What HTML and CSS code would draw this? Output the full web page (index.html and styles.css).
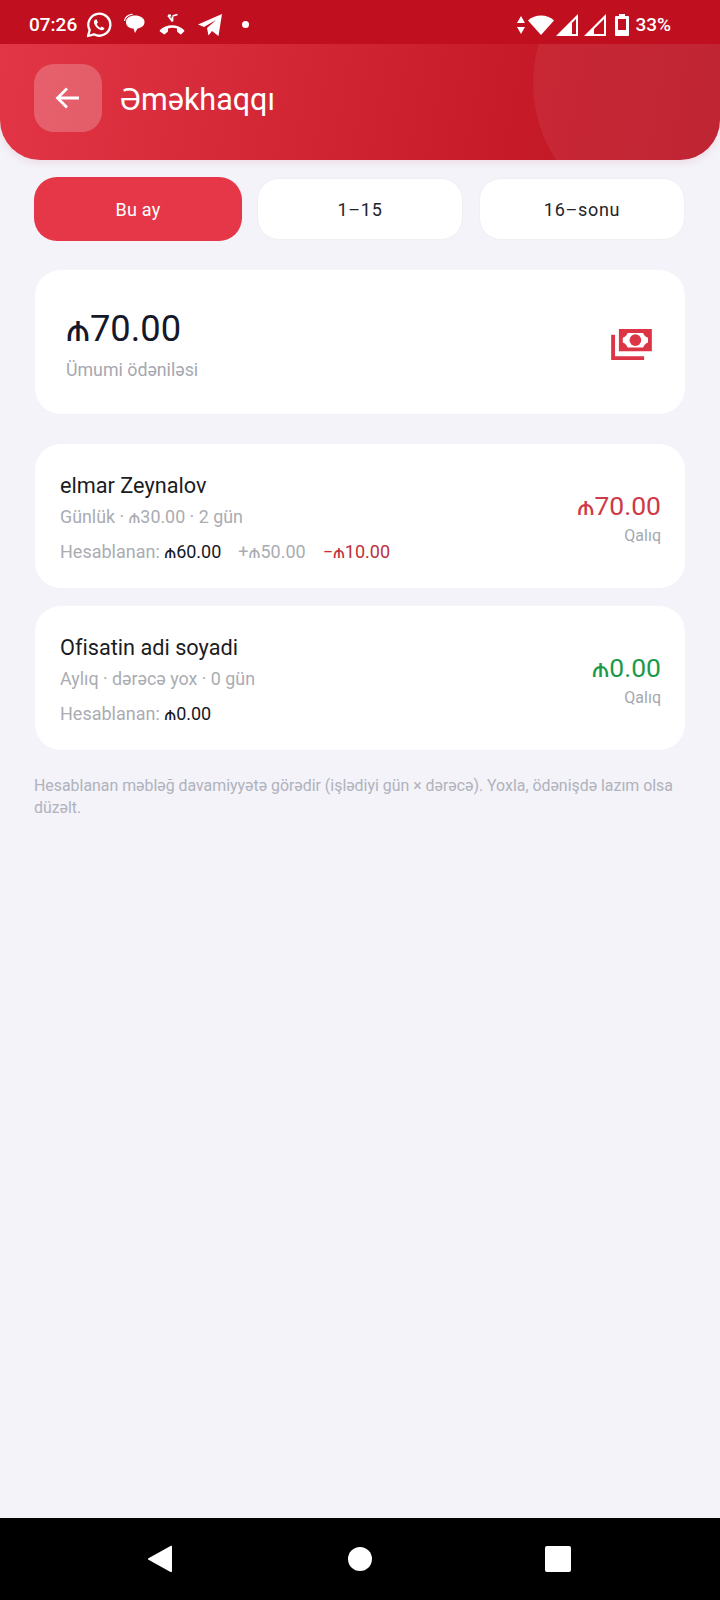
FILE: index.html
```html
<!DOCTYPE html>
<html lang="az">
<head>
<meta charset="utf-8">
<title>Əməkhaqqı</title>
<link rel="stylesheet" href="styles.css">
</head>
<body>
<div class="screen">
  <div class="status">
    <div class="status-left">
      <span class="clock">07:26</span>
      <svg class="si wa" viewBox="0 0 26 26"><path d="M2 24l1.700-6A11 11 0 1 1 8 22.300z" fill="none" stroke="#fff" stroke-width="2.300" stroke-linejoin="round"/><path d="M9.500 7.500c-1.500.8-2 2.500-1.200 4.500 1.200 3 3.500 5 6.200 6 2 .6 3.600-.2 4-1.800l-2.700-1.700-1.400 1.200c-1.600-.7-3-2.200-3.700-3.800l1.200-1.400-1.200-3z" fill="#fff"/></svg>
      <svg class="si msg" viewBox="0 0 24 24"><path d="M3 9c0-4 4-6.500 9-6.500S21.500 5 21.500 9 18 15 14.500 15.500L12 20l-1.500-4.500C6 15.500 3 13 3 9z" fill="#fff"/><path d="M1.500 8c.5-3.500 3.500-6 8-6.800" fill="none" stroke="#fff" stroke-width="1.200"/></svg>
      <svg class="si call" viewBox="0 0 26 24"><path d="M1 17c6-6.500 18-6.500 24 0 .5.600.5 1 0 1.500l-2.500 2.500c-.5.500-1 .5-1.500 0l-2.500-2c-.4-.3-.5-.6-.5-1v-2.500c-3-1-6-1-9 0V18c0 .4-.1.700-.5 1L6 21c-.5.500-1 .5-1.500 0L1 18.500c-.5-.5-.5-1 0-1.500z" fill="#fff"/><path d="M9 2.500l4.500 6M13.500 8.500V3.500M13.500 3l5-1.500M9 2.500h3" fill="none" stroke="#fff" stroke-width="1.800"/></svg>
      <svg class="si tg" viewBox="0 0 26 24"><path d="M1 11.500L25 1l-3.500 22-6.500-5-3.500 4.500-1.500-7.500 9-8-12 7z" fill="#fff"/></svg>
      <span class="dot"></span>
    </div>
    <div class="status-right">
      <svg class="sr updown" viewBox="0 0 10 20"><path d="M5 1l4 7H1zM5 19l4-7H1z" fill="#fff"/></svg>
      <svg class="sr wifi" viewBox="0 0 26 20"><path d="M0 5.500C7-1.300 19-1.300 26 5.500L13 20z" fill="#fff"/></svg>
      <svg class="sr sig" viewBox="0 0 22 22"><path fill-rule="evenodd" d="M0 22L22 0v22zM16 20h4V5l-4 4z" fill="#fff"/></svg>
      <svg class="sr sig" viewBox="0 0 22 22"><path fill-rule="evenodd" d="M0 22L22 0v22zM10 20h10V5L10 15z" fill="#fff"/></svg>
      <svg class="sr batt" viewBox="0 0 14 22"><path fill-rule="evenodd" d="M4 0h6v2h3a1 1 0 0 1 1 1v18a1 1 0 0 1-1 1H1a1 1 0 0 1-1-1V3a1 1 0 0 1 1-1h3zM3 5v11h8V5z" fill="#fff"/></svg>
      <span class="pct">33%</span>
    </div>
  </div>

  <header class="header">
    <span class="blob"></span>
    <button class="back" aria-label="Geri">
      <svg viewBox="0 0 28 28" class="back-ico"><path d="M25 14H4M13 4.500L3.500 14l9.500 9.500" fill="none" stroke="#fff" stroke-width="2.800"/></svg>
    </button>
    <h1 class="title">Əməkhaqqı</h1>
  </header>

  <main class="content">
    <div class="tabs">
      <button class="tab active">Bu ay</button>
      <button class="tab">1–15</button>
      <button class="tab">16–sonu</button>
    </div>

    <section class="card summary">
      <div>
        <div class="total">₼70.00</div>
        <div class="total-label">Ümumi ödəniləsi</div>
      </div>
      <svg class="money" viewBox="0 0 42 32"><path fill-rule="evenodd" d="M8 0h34v23H8zM17 4c-1 2.500-2.500 4-5 5v5c2.500 1 4 2.500 5 5h16c1-2.500 2.500-4 5-5V9c-2.500-1-4-2.500-5-5z" fill="#dc3545"/><circle cx="25" cy="11.500" r="6" fill="#dc3545"/><path d="M0 6h4v22h30v4H0z" fill="#dc3545"/></svg>
    </section>

    <section class="card worker">
      <div class="w-main">
        <div class="w-name">elmar Zeynalov</div>
        <div class="w-sub">Günlük · ₼30.00 · 2 gün</div>
        <div class="w-line">
          <span>Hesablanan: <b class="dark">₼60.00</b></span>
          <span>+₼50.00</span>
          <span class="neg">−₼10.00</span>
        </div>
      </div>
      <div class="w-side">
        <div class="amount red">₼70.00</div>
        <div class="side-label">Qalıq</div>
      </div>
    </section>

    <section class="card worker">
      <div class="w-main">
        <div class="w-name">Ofisatin adi soyadi</div>
        <div class="w-sub">Aylıq · dərəcə yox · 0 gün</div>
        <div class="w-line">
          <span>Hesablanan: <b class="dark">₼0.00</b></span>
        </div>
      </div>
      <div class="w-side">
        <div class="amount green">₼0.00</div>
        <div class="side-label">Qalıq</div>
      </div>
    </section>

    <p class="note">Hesablanan məbləğ davamiyyətə görədir (işlədiyi gün × dərəcə). Yoxla, ödənişdə lazım olsa düzəlt.</p>
  </main>

  <nav class="navbar">
    <svg class="nav-back" viewBox="0 0 26 28"><path d="M1.500 13.200L23.500 1c.8-.4 1.500 0 1.500 1v24c0 1-.7 1.400-1.500 1L1.500 14.800c-.7-.4-.7-1.200 0-1.600z" fill="#fff"/></svg>
    <span class="nav-home"></span>
    <span class="nav-square"></span>
  </nav>
</div>
</body>
</html>
```

FILE: styles.css
```css
* { box-sizing: border-box; }
html, body { margin: 0; padding: 0; }
body { font-family: Roboto, "Noto Sans", sans-serif; background: #f3f3f9; color: #16181f; }
.screen { width: 720px; height: 1600px; display: flex; flex-direction: column; overflow: hidden; }

.status { height: 44px; flex: none; background: #c01020; display: flex; justify-content: space-between; align-items: center; padding: 5px 49px 0 29px; color: #fff; }
.status-left, .status-right { display: flex; align-items: center; }
.clock { font-size: 19px; font-weight: 500; margin-right: 9px; }
.pct { font-size: 19px; font-weight: 500; margin-left: 6px; }
.si { display: block; }
.wa { width: 26px; height: 26px; margin-right: 11px; }
.msg { width: 24px; height: 24px; margin-right: 12px; }
.call { width: 26px; height: 24px; margin-right: 12px; }
.tg { width: 26px; height: 24px; margin-right: 19px; }
.dot { width: 7px; height: 7px; border-radius: 50%; background: #fff; }
.sr { display: block; }
.updown { width: 10px; height: 20px; margin-right: 2px; }
.wifi { width: 26px; height: 20px; margin-right: 2px; }
.sig { width: 22px; height: 22px; margin-right: 6px; }
.batt { width: 14px; height: 22px; margin-left: 3px; }

.header { position: relative; height: 116px; flex: none; overflow: hidden; background: linear-gradient(100deg, #e23646 0%, #c61a28 72%, #bc1828 100%); border-radius: 0 0 40px 40px; display: flex; align-items: center; padding: 0 34px 9px; box-shadow: 0 2px 8px rgba(200, 30, 50, .12); }
.blob { position: absolute; left: 533px; top: -101px; width: 280px; height: 280px; border-radius: 50%; background: rgba(255, 255, 255, .06); }
.back { width: 68px; height: 68px; border: 0; padding: 0; border-radius: 20px; background: rgba(255, 255, 255, .22); display: flex; align-items: center; justify-content: center; }
.back-ico { width: 28px; height: 28px; }
.title { margin: 4px 0 0 18px; font-size: 30.500px; line-height: 36px; font-weight: 400; color: #fff; }

.content { flex: 1; padding: 18px 35px 0; }
.tabs { display: grid; grid-template-columns: repeat(3, 1fr); gap: 16px; }
.tab { height: 62px; border-radius: 22px; border: 1px solid #eef0f4; background: #fff; font-family: inherit; font-size: 18px; letter-spacing: .7px; color: #22242b; }
.tab.active { background: #e63748; border-color: #e63748; box-shadow: 0 0 0 1px #e63748; color: #fff; letter-spacing: .2px; }

.card { background: #fff; border-radius: 26px; display: flex; align-items: center; justify-content: space-between; height: 144px; }
.summary { margin-top: 30px; padding: 3px 33px 0 31px; }
.total { font-size: 36.300px; line-height: 46px; color: #16182a; }
.total-label { font-size: 17.800px; line-height: 22px; margin-top: 7px; color: #a5a8b0; }
.money { width: 41px; height: 31px; margin-top: 2px; }

.worker { padding: 4px 24px 0 25px; margin-top: 18px; }
.summary + .worker { margin-top: 30px; }
.w-name { font-size: 21.700px; line-height: 26px; color: #1b1c22; }
.w-sub { font-size: 17.850px; line-height: 22px; margin-top: 7px; color: #aaacb2; }
.w-line { display: flex; gap: 17px; font-size: 18px; line-height: 22px; margin-top: 13px; color: #aaacb2; }
.dark { font-weight: 400; color: #16181f; }
.neg { color: #c0303a; }
.w-side { text-align: right; margin-top: -1px; }
.amount { font-size: 26.500px; line-height: 32px; }
.red { color: #cf3a48; }
.green { color: #1c9a4c; }
.side-label { font-size: 16px; line-height: 20px; margin-top: 4px; color: #a5a8ae; }

.note { margin: 25px 0 0 -1px; font-size: 15.900px; line-height: 22px; color: #b0b2bc; }

.navbar { height: 82px; flex: none; background: #000; display: flex; align-items: center; padding-left: 147px; }
.nav-back { width: 26px; height: 28px; }
.nav-home { width: 24px; height: 24px; border-radius: 50%; background: #fff; margin-left: 175px; }
.nav-square { width: 26px; height: 26px; border-radius: 2px; background: #fff; margin-left: 173px; }
```
